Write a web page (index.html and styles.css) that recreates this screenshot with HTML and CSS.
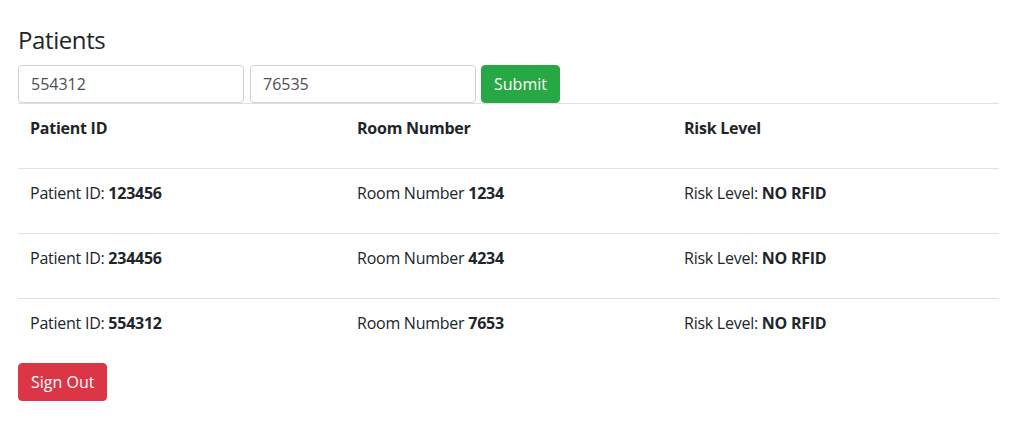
FILE: index.html
```html
<!DOCTYPE html>
<html lang="en">
<head>
<meta charset="utf-8">
<title>Patients</title>
<link rel="stylesheet" href="styles.css">
</head>
<body>
<div class="page">
  <h4 class="title">Patients</h4>
  <form class="entry">
    <input class="field" type="text" value="554312">
    <input class="field" type="text" value="76535">
    <button class="btn btn-green" type="button">Submit</button>
  </form>
  <table class="patients">
    <thead>
      <tr>
        <th><p>Patient ID</p></th>
        <th><p>Room Number</p></th>
        <th><p>Risk Level</p></th>
      </tr>
    </thead>
    <tbody>
      <tr>
        <td><p>Patient ID: <b>123456</b></p></td>
        <td><p>Room Number <b>1234</b></p></td>
        <td><p>Risk Level: <b>NO RFID</b></p></td>
      </tr>
      <tr>
        <td><p>Patient ID: <b>234456</b></p></td>
        <td><p>Room Number <b>4234</b></p></td>
        <td><p>Risk Level: <b>NO RFID</b></p></td>
      </tr>
      <tr>
        <td><p>Patient ID: <b>554312</b></p></td>
        <td><p>Room Number <b>7653</b></p></td>
        <td><p>Risk Level: <b>NO RFID</b></p></td>
      </tr>
    </tbody>
  </table>
  <button class="btn btn-red" type="button">Sign Out</button>
</div>
</body>
</html>
```
FILE: styles.css
```css
* { box-sizing: border-box; }
html, body { margin: 0; padding: 0; background: #fff; }
body {
  font-family: "Open Sans", "Noto Sans", sans-serif;
  font-size: 16px;
  line-height: 1.5;
  color: #212529;
  letter-spacing: -0.25px;
}
.page {
  padding: 26px 19px 0 18px;
}
.title {
  margin: 0 0 10px;
  font-size: 24px;
  font-weight: 400;
  line-height: 1.2;
  letter-spacing: -0.4px;
}
.entry {
  display: flex;
  gap: 6px;
  margin: 0;
}
.field {
  width: 226px;
  height: 38px;
  padding: 6px 12px;
  font: inherit;
  font-size: 16px;
  color: #495057;
  border: 1px solid #ced4da;
  border-radius: 4px;
  background: #fff;
}
.btn {
  height: 38px;
  padding: 6px 12px;
  font: inherit;
  font-size: 16px;
  color: #fff;
  border: 1px solid transparent;
  border-radius: 4px;
  cursor: pointer;
}
.btn-green { background: #28a745; border-color: #28a745; margin-left: -1px; }
.btn-red { background: #dc3545; border-color: #dc3545; display: block; }
.patients {
  width: 100%;
  border-collapse: collapse;
  table-layout: fixed;
}
.patients th, .patients td {
  text-align: left;
  vertical-align: top;
  padding: 12px;
  border-top: 1px solid #dee2e6;
}
.patients th { font-weight: 700; }
.patients p { margin: 0 0 16px; }
.patients b { font-weight: 700; }
```
